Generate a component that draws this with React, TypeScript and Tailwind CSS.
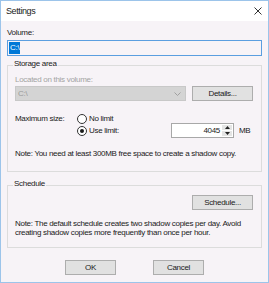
import React from "react";

function Radio({ checked }: { checked?: boolean }) {
  return (
    <div className="w-[10px] h-[10px] rounded-full border border-[#333333] bg-white flex items-center justify-center shrink-0">
      {checked && <div className="w-[4px] h-[4px] rounded-full bg-[#1a1a1a]" />}
    </div>
  );
}

function Btn({ children, className = "w-[61px]" }: { children: React.ReactNode; className?: string }) {
  return (
    <div
      className={
        "h-[15px] border border-[#adadad] bg-[#e1e1e1] flex items-center justify-center shrink-0 " +
        className
      }
    >
      {children}
    </div>
  );
}

export default function App() {
  return (
    <div className="w-[269px] h-[283px] border border-[#9cc4ea] bg-[#f7f3f7] flex flex-col font-['Liberation_Sans',Arial,sans-serif] text-[8px] leading-[10px] tracking-[-0.3px] text-[#1a1a1a] overflow-hidden">
      {/* Title bar */}
      <div className="h-[20px] bg-white flex items-center justify-between pl-[5px] pr-[6px] shrink-0">
        <span className="text-[9px] tracking-[-0.4px] text-[#222222]">Settings</span>
        <svg width="8" height="8" viewBox="0 0 8 8">
          <path d="M0.5 0.5 L7.5 7.5 M7.5 0.5 L0.5 7.5" stroke="#333333" strokeWidth="1" />
        </svg>
      </div>

      {/* Body */}
      <div className="flex-1 flex flex-col px-[6px]">
        <div className="mt-[7px] h-[10px]">Volume:</div>
        <div className="mt-[2px] h-[16px] border border-[#5a9ee0] flex items-center pl-px">
          <span className="bg-[#0078d7] text-white h-[12px] leading-[12px] px-px">C:\</span>
        </div>

        {/* Storage area */}
        <div className="relative mt-[9px] h-[107px] border border-[#dcdcdc] pl-[7px] pr-[8px] flex flex-col">
          <span className="absolute left-[5px] -top-[7px] px-px bg-[#f7f3f7]">Storage area</span>
          <div className="mt-[9px] h-[10px] text-[#a3a3a3]">Located on this volume:</div>
          <div className="mt-px flex justify-between">
            <div className="w-[171px] h-[15px] bg-[#d4d4d4] border border-[#c8c8c8] flex items-center justify-between pl-[2px] pr-[4px] text-[#9a9a9a]">
              <span>C:\</span>
              <svg width="7" height="4" viewBox="0 0 7 4">
                <path d="M0.5 0.5 L3.5 3.5 L6.5 0.5" stroke="#a0a0a0" strokeWidth="1" fill="none" />
              </svg>
            </div>
            <Btn>Details...</Btn>
          </div>

          <div className="mt-[13px] flex">
            <div className="w-[62px] h-[10px]">Maximum size:</div>
            <div className="flex flex-col">
              <div className="h-[10px] flex items-center gap-[2px]">
                <Radio />
                <span>No limit</span>
              </div>
              <div className="-mt-px h-[15px] flex items-center">
                <div className="w-[94px] flex items-center gap-[2px]">
                  <Radio checked />
                  <span>Use limit:</span>
                </div>
                <div className="w-[63px] h-[15px] border border-[#a8a8a8] bg-white flex">
                  <div className="flex-1 flex items-center justify-end pr-[2px]">4045</div>
                  <div className="w-[10px] flex flex-col my-px mr-px gap-px">
                    <div className="flex-1 bg-[#e5e5e5] flex items-center justify-center">
                      <svg width="5" height="3" viewBox="0 0 5 3">
                        <path d="M0 3 L2.5 0 L5 3 Z" fill="#222222" />
                      </svg>
                    </div>
                    <div className="flex-1 bg-[#e5e5e5] flex items-center justify-center">
                      <svg width="5" height="3" viewBox="0 0 5 3">
                        <path d="M0 0 L2.5 3 L5 0 Z" fill="#222222" />
                      </svg>
                    </div>
                  </div>
                </div>
                <span className="ml-[5px]">MB</span>
              </div>
            </div>
          </div>

          <div className="mt-[11px] h-[10px] whitespace-nowrap">
            Note: You need at least 300MB free space to create a shadow copy.
          </div>
        </div>

        {/* Schedule */}
        <div className="relative mt-[13px] h-[63px] border border-[#dcdcdc] pl-[7px] pr-[8px] flex flex-col">
          <span className="absolute left-[5px] -top-[7px] px-px bg-[#f7f3f7]">Schedule</span>
          <div className="mt-[9px] flex justify-end">
            <Btn>Schedule...</Btn>
          </div>
          <div className="mt-[9px] leading-[9px] whitespace-nowrap flex flex-col">
            <span>Note: The default schedule creates two shadow copies per day. Avoid</span>
            <span>creating shadow copies more frequently than once per hour.</span>
          </div>
        </div>

        {/* Buttons */}
        <div className="mt-[12px] flex">
          <Btn className="ml-[58px] w-[51px]">OK</Btn>
          <Btn className="ml-[37px] w-[51px]">Cancel</Btn>
        </div>
      </div>
    </div>
  );
}
